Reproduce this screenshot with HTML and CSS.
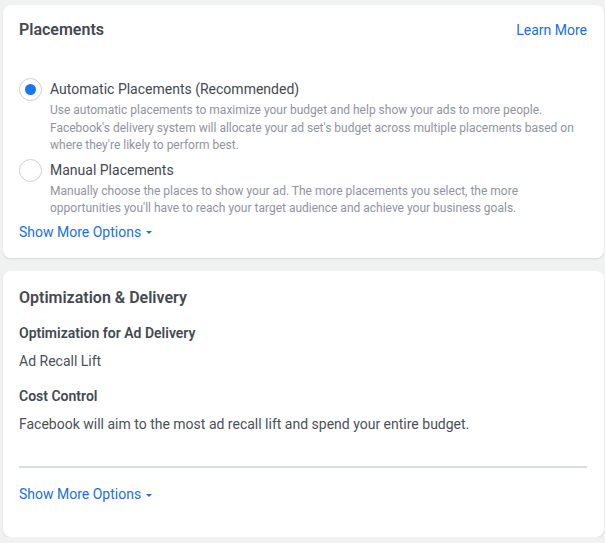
FILE: index.html
```html
<!DOCTYPE html>
<html lang="en">
<head>
    <meta charset="UTF-8">
    <title>Placements</title>
    <link rel="stylesheet" href="styles.css">
</head>
<body>

    <div class="card placements">
        <div class="card-header">
            <h3>Placements</h3>
            <a class="link" href="#">Learn More</a>
        </div>

        <div class="options">
            <div class="option">
                <span class="radio checked"></span>
                <div class="option-body">
                    <div class="option-label">Automatic Placements (Recommended)</div>
                    <p class="option-desc">Use automatic placements to maximize your budget and help show your ads to more people. Facebook's delivery system will allocate your ad set's budget across multiple placements based on where they're likely to perform best.</p>
                </div>
            </div>
            <div class="option">
                <span class="radio"></span>
                <div class="option-body">
                    <div class="option-label">Manual Placements</div>
                    <p class="option-desc">Manually choose the places to show your ad. The more placements you select, the more opportunities you'll have to reach your target audience and achieve your business goals.</p>
                </div>
            </div>
        </div>

        <a class="link more" href="#">Show More Options <span class="caret"></span></a>
    </div>

    <div class="card delivery">
        <h3>Optimization &amp; Delivery</h3>

        <div class="field">
            <h4>Optimization for Ad Delivery</h4>
            <p>Ad Recall Lift</p>
        </div>
        <div class="field">
            <h4>Cost Control</h4>
            <p>Facebook will aim to the most ad recall lift and spend your entire budget.</p>
        </div>

        <hr class="divider">

        <a class="link more" href="#">Show More Options <span class="caret"></span></a>
    </div>

</body>
</html>
```
FILE: styles.css
```css
body {
    margin: 0;
    padding: 5px 1px 0 3px;
    background: #f0f2f2;
    font-family: Roboto, "Liberation Sans", Arial, sans-serif;
    color: #4b4f56;
}
.card {
    background: #fff;
    border-radius: 8px;
    box-shadow: 0 1px 2px rgba(0, 0, 0, 0.1);
    padding: 0 17px 0 16px;
}
.placements {
    height: 253px;
    box-sizing: border-box;
    padding-top: 16px;
}
.delivery {
    margin-top: 13px;
    height: 266px;
    box-sizing: border-box;
    padding-top: 18px;
}
h3 {
    margin: 0;
    font-size: 16px;
    line-height: 18px;
    font-weight: 600;
    color: #444950;
}
.card-header {
    display: flex;
    justify-content: space-between;
    align-items: center;
}
.link {
    color: #216fdb;
    font-size: 14px;
    line-height: 18px;
    text-decoration: none;
}
.options {
    margin-top: 40px;
    display: flex;
    flex-direction: column;
    gap: 5px;
}
.option {
    display: flex;
    align-items: flex-start;
}
.radio {
    flex: none;
    box-sizing: border-box;
    width: 23px;
    height: 23px;
    margin: -1px 8px 0 0;
    border: 1px solid #ccd0d5;
    border-radius: 50%;
    display: flex;
    align-items: center;
    justify-content: center;
}
.radio.checked::after {
    content: "";
    width: 11px;
    height: 11px;
    border-radius: 50%;
    background: #1877f2;
}
.option-label {
    font-size: 14px;
    line-height: 20px;
    color: #444950;
}
.option-desc {
    margin: 3px 0 0;
    font-size: 12px;
    line-height: 17.5px;
    color: #90949c;
}
.more {
    display: inline-block;
    margin-top: 4px;
    line-height: 20px;
}
.caret {
    display: inline-block;
    width: 0;
    height: 0;
    margin-left: 1px;
    vertical-align: middle;
    border-left: 3px solid transparent;
    border-right: 3px solid transparent;
    border-top: 3px solid #216fdb;
}
.field h4 {
    margin: 17px 0 0;
    font-size: 14px;
    line-height: 18px;
    font-weight: 600;
    color: #444950;
}
.field p {
    margin: 10px 0 0;
    font-size: 14px;
    line-height: 18px;
    color: #4b4f56;
}
.divider {
    margin: 33px 0 0;
    border: none;
    height: 2px;
    background: #dadde1;
}
.delivery .more {
    margin-top: 16px;
}
```
